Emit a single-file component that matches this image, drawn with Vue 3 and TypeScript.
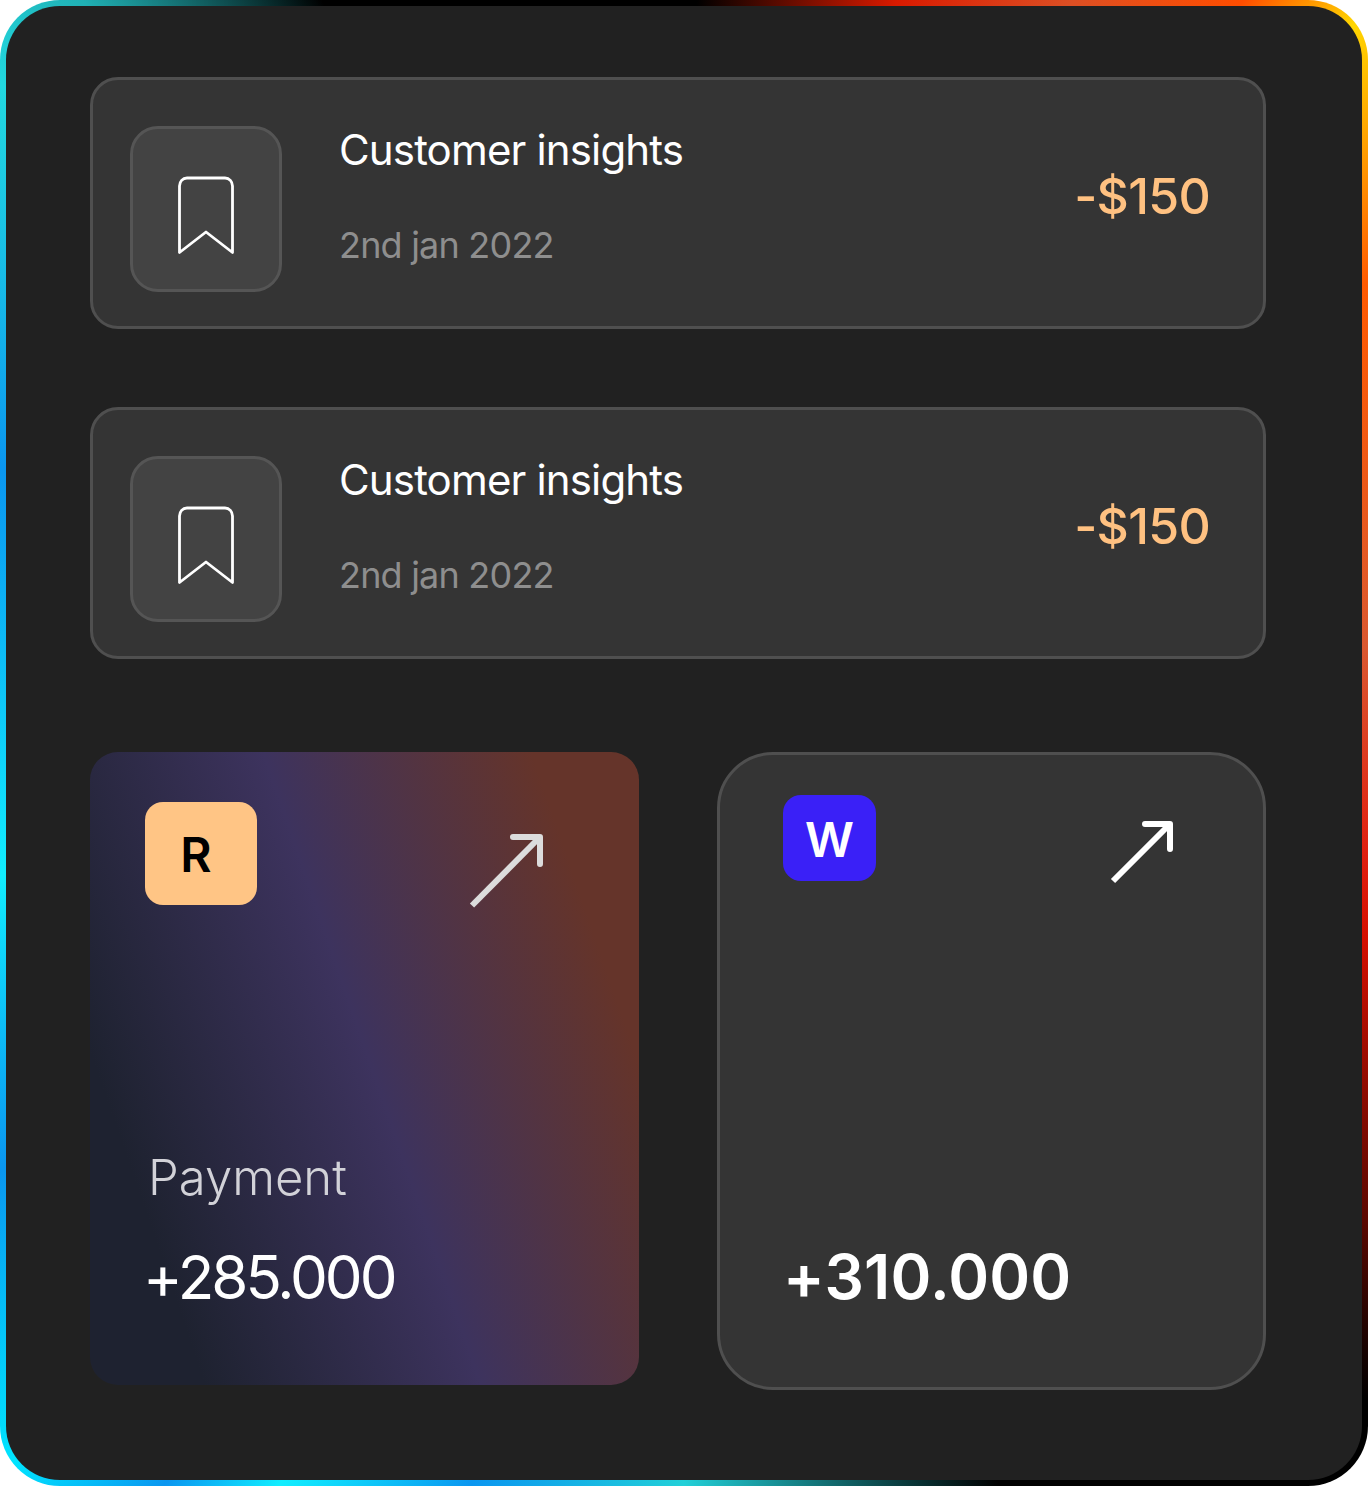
<template>
  <div class="frame">
    <div class="inner">
      <div class="rows">
        <div v-for="r in rows" :key="r.id" class="row">
          <div class="icon-box">
            <svg width="58" height="80" viewBox="0 0 58 80" fill="none">
              <path d="M2.5 76.5V10C2.5 5.6 5.6 2 10 2H48C52.4 2 55.5 5.6 55.5 10V76.5L29 56Z" stroke="#fff" stroke-width="2.8" stroke-linejoin="round" />
            </svg>
          </div>
          <div class="row-text">
            <div class="row-title">{{ r.title }}</div>
            <div class="row-date">{{ r.date }}</div>
          </div>
          <div class="row-amount">{{ r.amount }}</div>
        </div>
      </div>
      <div class="cards">
        <div class="card card-pay">
          <div class="card-top">
            <div class="badge badge-r">R</div>
            <svg class="arrow" width="76" height="76" viewBox="0 0 76 76" fill="none">
              <path d="M3 71.5L71 3" stroke="#dcdcdc" stroke-width="6" />
              <path d="M44 3H71V30" stroke="#dcdcdc" stroke-width="6" stroke-linecap="round" stroke-linejoin="round" />
            </svg>
          </div>
          <div class="card-bottom">
            <div class="pay-label">Payment</div>
            <div class="pay-value">+285.000</div>
          </div>
        </div>
        <div class="card card-plain">
          <div class="card-top">
            <div class="badge badge-w">W</div>
            <svg class="arrow" width="64" height="64" viewBox="0 0 64 64" fill="none">
              <path d="M3 60L60 3" stroke="#fff" stroke-width="6" />
              <path d="M35 3H60V28" stroke="#fff" stroke-width="6" stroke-linecap="round" stroke-linejoin="round" />
            </svg>
          </div>
          <div class="plain-value">+310.000</div>
        </div>
      </div>
    </div>
  </div>
</template>

<script setup lang="ts">
const rows = [
  { id: 1, title: 'Customer insights', date: '2nd jan 2022', amount: '-$150' },
  { id: 2, title: 'Customer insights', date: '2nd jan 2022', amount: '-$150' }
]
</script>

<style>
html, body { background: #fff; }
</style>

<style scoped>
.frame {
  width: 1368px;
  height: 1486px;
  box-sizing: border-box;
  padding: 6px;
  border-radius: 60px;
  background: conic-gradient(from 0deg at 50% 50%, #000 1deg, #d91a00 16deg, #dc4f24 27.6deg, #ff4d00 37deg, #ffd600 43deg, #ff5a00 56deg, #d95830 82deg, #e02010 99deg, #d40f00 106deg, #5a0800 125deg, #000 134deg, #000 157deg, #22d0d8 180deg, #0a96f0 196deg, #1ef 208.6deg, #0a96f0 215deg, #00e5ff 223deg, #0a96f0 238deg, #1ef 259deg, #0a96f0 292deg, #22d8e0 314deg, #20b0b4 321deg, #000 334deg);
  font-family: Inter, sans-serif;
}
.inner {
  height: 100%;
  box-sizing: border-box;
  background: #212121;
  border-radius: 54px;
  padding: 71px 96px 0 84px;
}
.rows {
  display: flex;
  flex-direction: column;
  gap: 78px;
}
.row {
  height: 252px;
  box-sizing: border-box;
  border: 3px solid #4f4f4f;
  border-radius: 28px;
  background: #343434;
  display: flex;
  align-items: flex-start;
  padding: 46px 53px 0 37px;
}
.icon-box {
  width: 152px;
  height: 166px;
  box-sizing: border-box;
  flex: none;
  padding-top: 14px;
  border: 3px solid #555;
  border-radius: 28px;
  background: #434343;
  display: flex;
  align-items: center;
  justify-content: center;
}
.row-text {
  flex: 1;
  margin-left: 57px;
}
.row-title {
  color: #fff;
  font-size: 42px;
  line-height: 50px;
  letter-spacing: -0.85px;
  margin-top: -1px;
}
.row-date {
  color: #8e8e8e;
  font-size: 36px;
  line-height: 44px;
  letter-spacing: -0.8px;
  margin-top: 48px;
}
.row-amount {
  color: #ffc181;
  font-size: 50px;
  font-weight: 450;
  line-height: 60px;
  letter-spacing: -0.7px;
  margin-top: 40px;
}
.cards {
  display: flex;
  gap: 78px;
  margin-top: 93px;
}
.card {
  flex: none;
  box-sizing: border-box;
  width: 549px;
}
.card-pay {
  height: 633px;
  border-radius: 28px;
  background: linear-gradient(71deg, #1e2230 15%, #3d335e 51%, #65342a 86%);
  padding: 50px 94px 0 55px;
}
.card-plain {
  height: 638px;
  border: 3px solid #4f4f4f;
  border-radius: 56px;
  background: #343434;
  padding: 40px 89px 0 63px;
}
.card-top {
  display: flex;
  justify-content: space-between;
  align-items: flex-start;
}
.badge {
  display: flex;
  align-items: center;
  justify-content: center;
  box-sizing: border-box;
  padding-top: 2px;
  font-weight: 600;
}
.badge-r {
  width: 112px;
  height: 103px;
  padding-right: 10px;
  border-radius: 18px;
  background: #ffc585;
  color: #000;
  font-size: 48px;
}
.badge-w {
  width: 93px;
  height: 86px;
  border-radius: 18px;
  background: #3a20f7;
  color: #fff;
  font-size: 48px;
}
.card-pay .arrow { margin-top: 32px; }
.card-plain .arrow { margin-top: 26px; }
.pay-label {
  color: #d2d2d8;
  font-size: 49px;
  font-weight: 300;
  line-height: 58px;
  margin-top: 239px;
  margin-left: 3px;
}
.pay-value {
  color: #fff;
  font-size: 60px;
  line-height: 70px;
  letter-spacing: -3px;
  margin-top: 35px;
  margin-left: -2px;
}
.plain-value {
  color: #fff;
  font-size: 62px;
  font-weight: 600;
  line-height: 76px;
  letter-spacing: 0.2px;
  margin-top: 354px;
}
</style>
